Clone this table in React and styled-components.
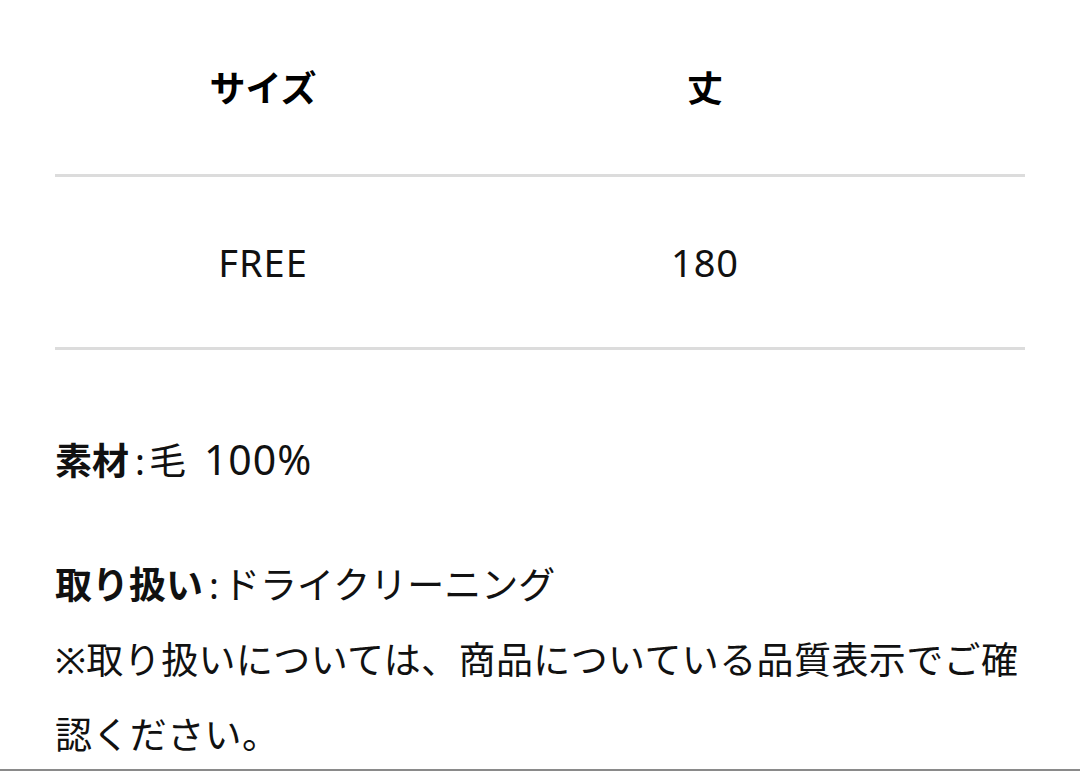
import styled, { createGlobalStyle } from "styled-components";

const GlobalStyle = createGlobalStyle`
  html, body {
    margin: 0;
    padding: 0;
    background: #ffffff;
  }
  body {
    font-family: "Noto Sans", "Noto Sans CJK JP", sans-serif;
    color: #111111;
  }
`;

const sizeRows = [{ size: "FREE", length: "180" }];

export default function App() {
  return (
    <>
      <GlobalStyle />
      <Page>
        <SizeTable>
          <Row $height={174}>
            <HeadCell>サイズ</HeadCell>
            <HeadCell>丈</HeadCell>
          </Row>
          {sizeRows.map((row) => (
            <Row key={row.size} $height={170}>
              <Cell>{row.size}</Cell>
              <Cell>{row.length}</Cell>
            </Row>
          ))}
        </SizeTable>

        <Notes>
          <Paragraph>
            <Label>素材</Label>
            <Colon>:</Colon>毛<Num>100%</Num>
          </Paragraph>
          <Paragraph>
            <Label>取り扱い</Label>
            <Colon>:</Colon>ドライクリーニング
            <br />
            <Wide>※取り扱いについては、商品についている品質表示でご確認ください。</Wide>
          </Paragraph>
        </Notes>
      </Page>
    </>
  );
}

const Page = styled.main`
  height: 769px;
  overflow: hidden;
  border-bottom: 2px solid #8a8a8a;
  padding: 0 55px;
`;

const SizeTable = styled.section`
  width: 970px;
`;

const Row = styled.div`
  display: grid;
  grid-template-columns: 416px 468px 1fr;
  align-items: center;
  height: ${({ $height }) => $height}px;
  border-bottom: 3px solid #dcdcdc;
`;

const HeadCell = styled.div`
  text-align: center;
  font-family: "Noto Sans CJK JP", sans-serif;
  font-size: 36px;
  font-weight: 700;
  color: #000000;
  margin-top: -3px;
`;

const Cell = styled.div`
  text-align: center;
  font-size: 38px;
  letter-spacing: 1px;
  color: #111111;
`;

const Notes = styled.section`
  display: flex;
  flex-direction: column;
  gap: 49px;
  margin-top: 72px;
  width: 970px;
`;

const Paragraph = styled.p`
  margin: 0;
  font-size: 37px;
  line-height: 75px;
  color: #111111;
`;

const Label = styled.span`
  font-weight: 700;
`;

const Colon = styled.span`
  margin: 0 4px 0 6px;
`;

const Num = styled.span`
  margin-left: 18px;
  font-size: 41px;
  letter-spacing: 1px;
`;

const Wide = styled.span`
  letter-spacing: 0.4px;
`;
